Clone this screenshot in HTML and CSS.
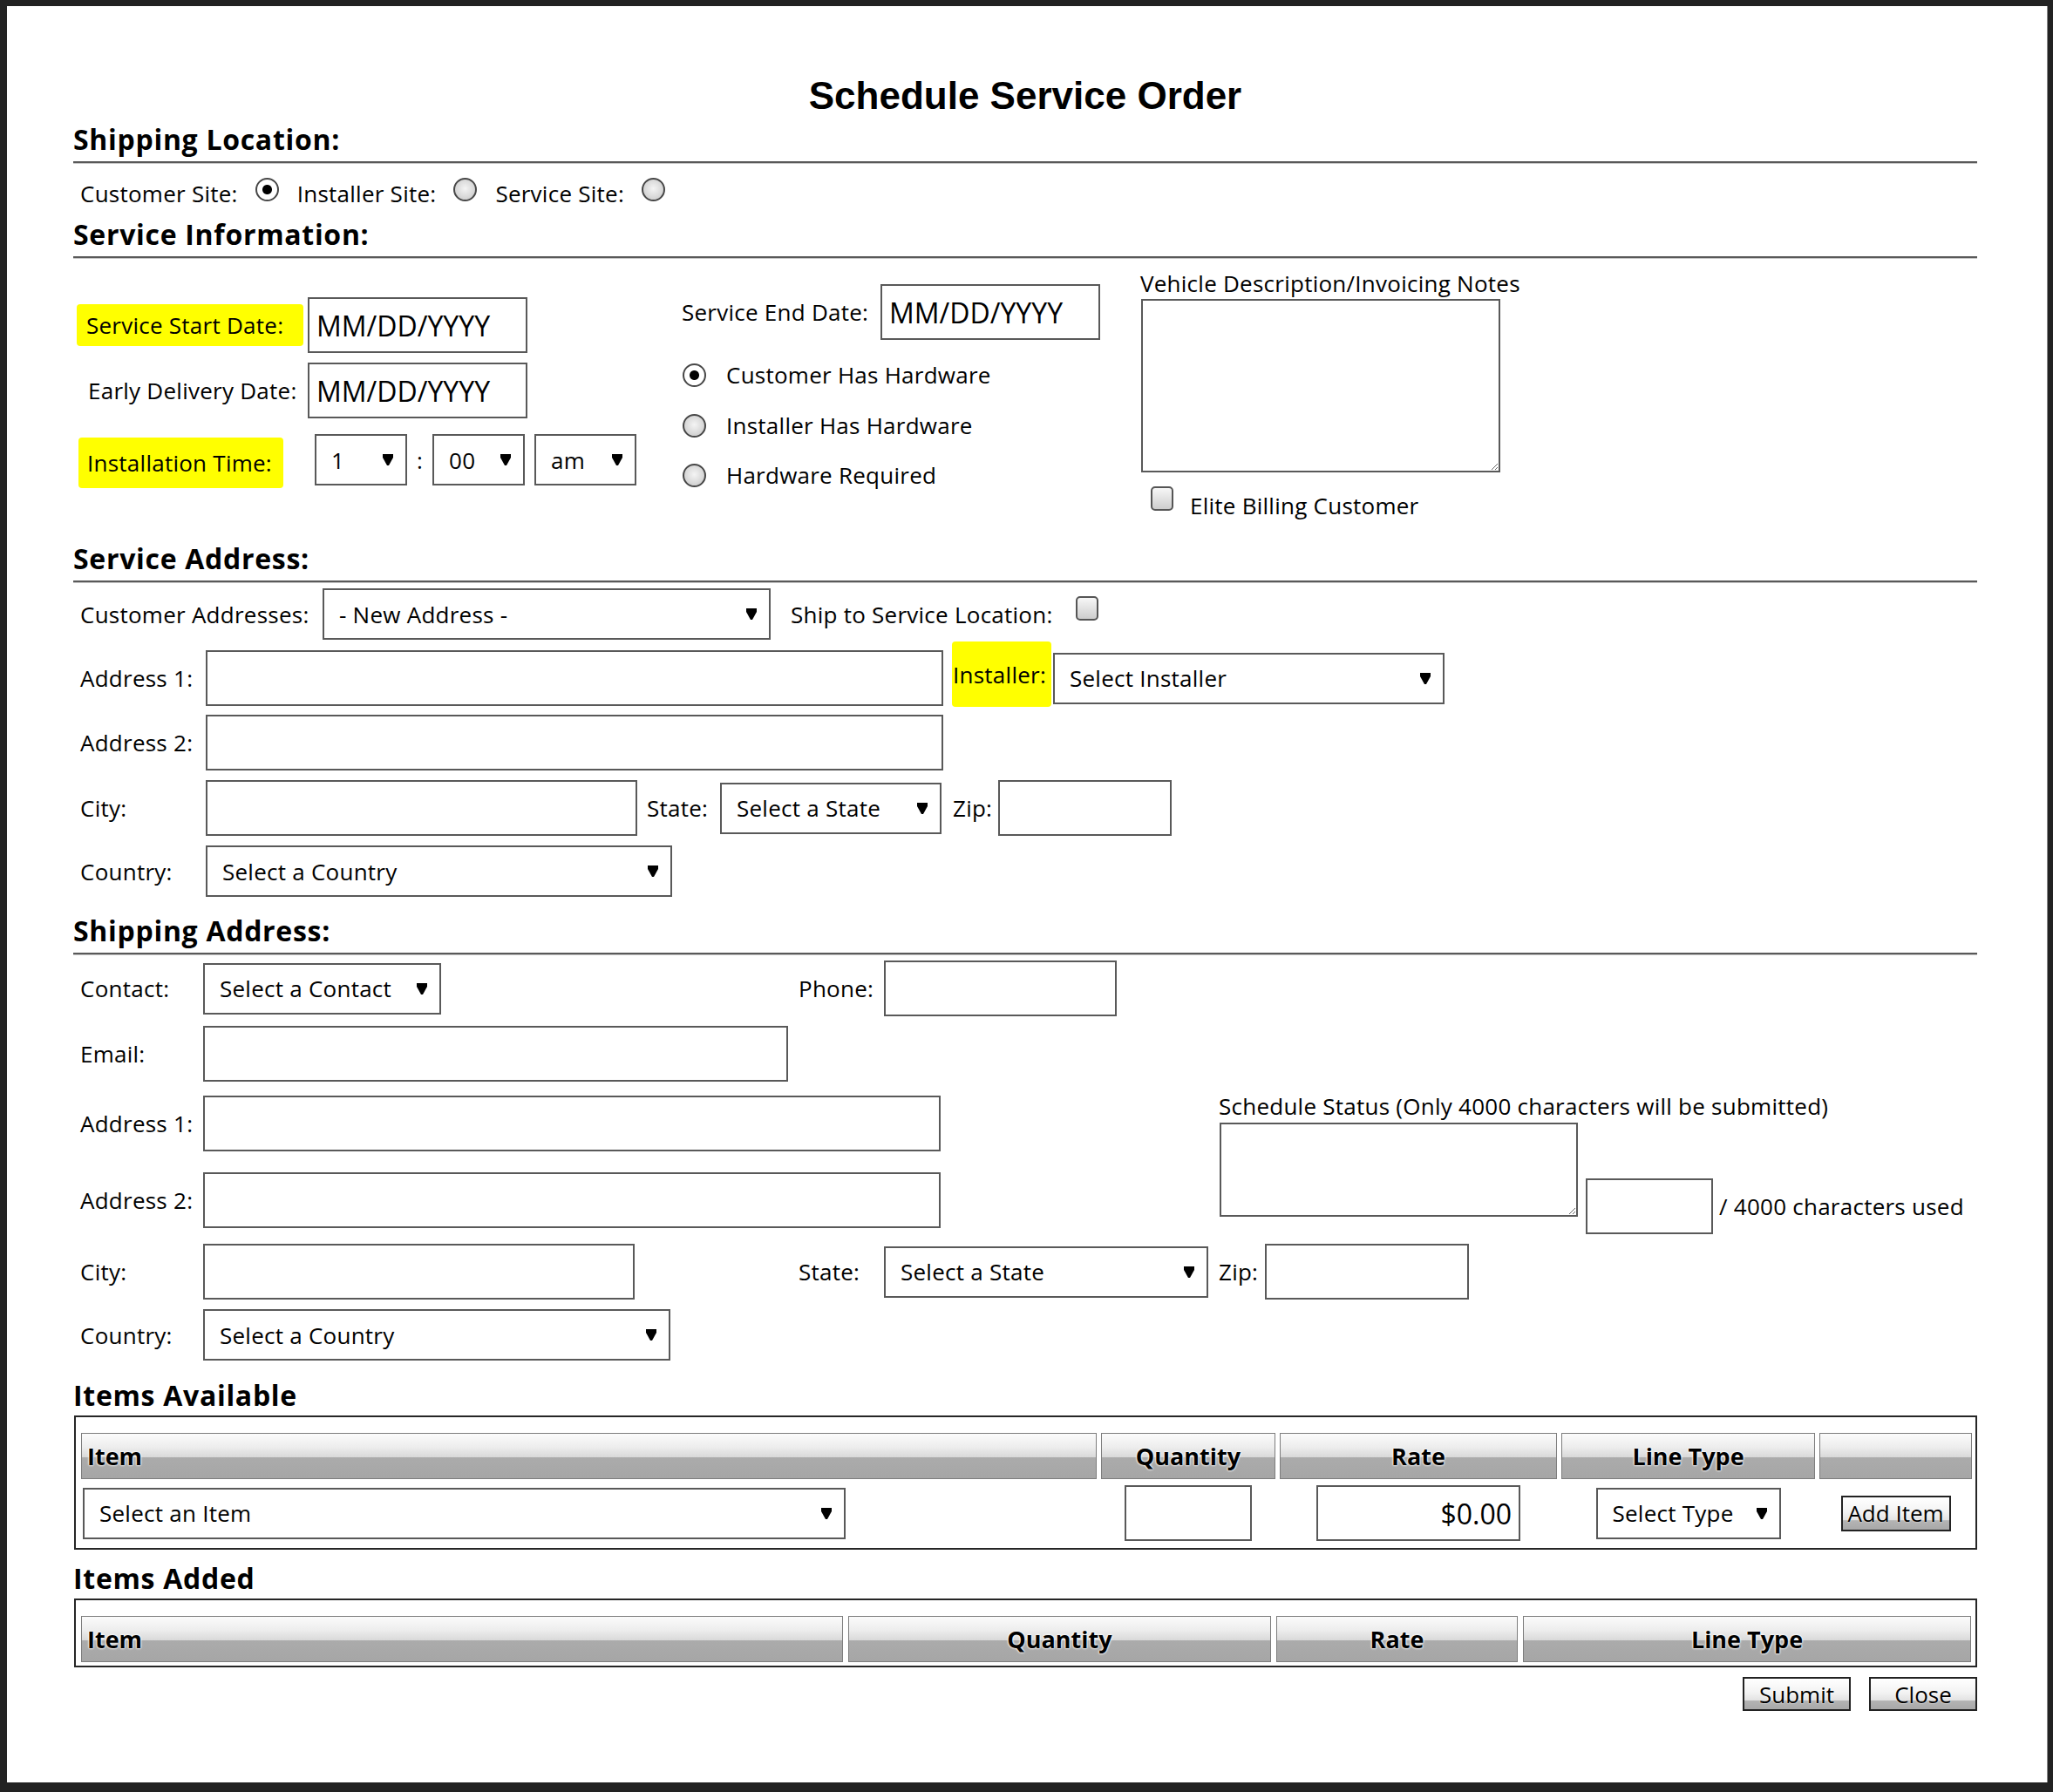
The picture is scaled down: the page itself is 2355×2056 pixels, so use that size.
FILE: index.html
```html
<!DOCTYPE html>
<html lang="en">
<head>
<meta charset="utf-8">
<title>Schedule Service Order</title>
<link rel="stylesheet" href="styles.css">
</head>
<body>
<div class="panel">
  <h1 class="title">Schedule Service Order</h1>

  <h2 class="sec sec-loc">Shipping Location:</h2>
  <div class="site-row">
    <span>Customer Site:</span><input type="radio" name="site" class="radio site-radio" checked>
    <span>Installer Site:</span><input type="radio" name="site" class="radio site-radio">
    <span>Service Site:</span><input type="radio" name="site" class="radio site-radio">
  </div>

  <h2 class="sec sec-info">Service Information:</h2>
  <div class="info">
    <div class="info-left">
      <div class="irow">
        <span class="hl hl-start">Service Start Date:</span>
        <input class="txt date" type="text" value="MM/DD/YYYY">
      </div>
      <div class="irow">
        <span class="ilabel">Early Delivery Date:</span>
        <input class="txt date" type="text" value="MM/DD/YYYY">
      </div>
      <div class="irow irow-time">
        <span class="hl hl-time">Installation Time:</span>
        <div class="sel sel-hour"><span>1</span><svg class="arr" viewBox="0 0 12 13"><path d="M0 0H12V4L7 13H5L0 4Z"/></svg></div>
        <span class="colon">:</span>
        <div class="sel sel-min"><span>00</span><svg class="arr" viewBox="0 0 12 13"><path d="M0 0H12V4L7 13H5L0 4Z"/></svg></div>
        <div class="sel sel-ampm"><span>am</span><svg class="arr" viewBox="0 0 12 13"><path d="M0 0H12V4L7 13H5L0 4Z"/></svg></div>
      </div>
    </div>
    <div class="info-mid">
      <div class="mrow"><span class="mlabel">Service End Date:</span><input class="txt date" type="text" value="MM/DD/YYYY"></div>
      <label class="rrow rrow-1"><input type="radio" name="hw" class="radio" checked><span>Customer Has Hardware</span></label>
      <label class="rrow"><input type="radio" name="hw" class="radio"><span>Installer Has Hardware</span></label>
      <label class="rrow rrow-3"><input type="radio" name="hw" class="radio"><span>Hardware Required</span></label>
    </div>
    <div class="info-right">
      <div class="notes-label">Vehicle Description/Invoicing Notes</div>
      <textarea class="notes"></textarea>
      <label class="elite"><input type="checkbox" class="check elite-check"><span class="elite-text">Elite Billing Customer</span></label>
    </div>
  </div>

  <h2 class="sec sec-svc">Service Address:</h2>
  <div class="arow arow-1">
    <span class="cust-label">Customer Addresses:</span>
    <div class="sel sel-cust"><span>- New Address -</span><svg class="arr" viewBox="0 0 12 13"><path d="M0 0H12V4L7 13H5L0 4Z"/></svg></div>
    <span class="ship-label">Ship to Service Location:</span>
    <input type="checkbox" class="check ship-check">
  </div>
  <div class="arow arow-2">
    <span class="alabel">Address 1:</span>
    <input class="txt addr" type="text">
    <span class="hl hl-inst">Installer:</span>
    <div class="sel sel-inst"><span>Select Installer</span><svg class="arr" viewBox="0 0 12 13"><path d="M0 0H12V4L7 13H5L0 4Z"/></svg></div>
  </div>
  <div class="arow arow-3">
    <span class="alabel">Address 2:</span>
    <input class="txt addr" type="text">
  </div>
  <div class="arow arow-4">
    <span class="alabel">City:</span>
    <input class="txt city" type="text">
    <span class="state-label">State:</span>
    <div class="sel sel-state"><span>Select a State</span><svg class="arr" viewBox="0 0 12 13"><path d="M0 0H12V4L7 13H5L0 4Z"/></svg></div>
    <span class="zip-label">Zip:</span>
    <input class="txt zip" type="text">
  </div>
  <div class="arow arow-5">
    <span class="alabel">Country:</span>
    <div class="sel sel-country"><span>Select a Country</span><svg class="arr" viewBox="0 0 12 13"><path d="M0 0H12V4L7 13H5L0 4Z"/></svg></div>
  </div>

  <h2 class="sec sec-ship">Shipping Address:</h2>
  <div class="sgrid">
    <div class="cell r1 c1">Contact:</div>
    <div class="cell r1 c2"><div class="sel sel-contact"><span>Select a Contact</span><svg class="arr" viewBox="0 0 12 13"><path d="M0 0H12V4L7 13H5L0 4Z"/></svg></div></div>
    <div class="cell r1 c3">Phone:</div>
    <div class="cell r1 c4"><input class="txt phone" type="text"></div>

    <div class="cell r2 c1">Email:</div>
    <div class="cell r2 c2"><input class="txt email" type="text"></div>

    <div class="cell r3 c1">Address 1:</div>
    <div class="cell r3 cspan"><input class="txt addr" type="text"></div>

    <div class="sched">
      <div class="sched-label">Schedule Status (Only 4000 characters will be submitted)</div>
      <div class="sched-body">
        <textarea class="sched-text"></textarea>
        <div class="counter-wrap">
          <input class="txt counter" type="text">
          <span class="counter-text">/ 4000 characters used</span>
        </div>
      </div>
    </div>

    <div class="cell r4 c1">Address 2:</div>
    <div class="cell r4 cspan"><input class="txt addr" type="text"></div>

    <div class="cell r5 c1">City:</div>
    <div class="cell r5 c2"><input class="txt scity" type="text"></div>
    <div class="cell r5 c3">State:</div>
    <div class="cell r5 c4"><div class="sel sel-sstate"><span>Select a State</span><svg class="arr" viewBox="0 0 12 13"><path d="M0 0H12V4L7 13H5L0 4Z"/></svg></div></div>
    <div class="cell r5 c5"><span class="szip-label">Zip:</span><input class="txt szip" type="text"></div>

    <div class="cell cell-short r6 c1">Country:</div>
    <div class="cell cell-short r6 c2"><div class="sel sel-scountry"><span>Select a Country</span><svg class="arr" viewBox="0 0 12 13"><path d="M0 0H12V4L7 13H5L0 4Z"/></svg></div></div>
  </div>

  <h3 class="items-h">Items Available</h3>
  <div class="tbl">
    <div class="tgrid tgrid-avail thead">
      <div class="th th-left">Item</div>
      <div class="th">Quantity</div>
      <div class="th">Rate</div>
      <div class="th">Line Type</div>
      <div class="th"></div>
    </div>
    <div class="tgrid tgrid-avail tbody">
      <div class="td td-left"><div class="sel sel-item"><span>Select an Item</span><svg class="arr" viewBox="0 0 12 13"><path d="M0 0H12V4L7 13H5L0 4Z"/></svg></div></div>
      <div class="td"><input class="txt qty" type="text"></div>
      <div class="td"><input class="txt rate" type="text" value="$0.00"></div>
      <div class="td"><div class="sel sel-type"><span>Select Type</span><svg class="arr" viewBox="0 0 12 13"><path d="M0 0H12V4L7 13H5L0 4Z"/></svg></div></div>
      <div class="td"><button class="btn btn-add" type="button">Add Item</button></div>
    </div>
  </div>

  <h3 class="items-h items-h2">Items Added</h3>
  <div class="tbl tbl-added">
    <div class="tgrid tgrid-added thead">
      <div class="th th-left">Item</div>
      <div class="th">Quantity</div>
      <div class="th">Rate</div>
      <div class="th">Line Type</div>
    </div>
  </div>

  <div class="actions">
    <button class="btn" type="button">Submit</button>
    <button class="btn" type="button">Close</button>
  </div>
</div>
</body>
</html>
```
FILE: styles.css
```css
* { box-sizing: border-box; }

html, body {
  margin: 0;
  background: #222;
}

body {
  font-family: "Open Sans", "Liberation Sans", sans-serif;
  font-size: 26px;
  letter-spacing: 0.25px;
  line-height: 36px;
  color: #000;
}

.panel {
  width: 2340px;
  height: 2038px;
  margin: 7px 0 0 8px;
  padding: 78px 80px 0 76px;
  background: #fff;
  box-shadow: 1px 0 0 #8a8a8a;
}

.title {
  margin: 0;
  font-family: "Liberation Sans", Arial, sans-serif;
  font-size: 44px;
  line-height: 50px;
  font-weight: 700;
  letter-spacing: 0;
  text-align: center;
}

.sec {
  margin: 0;
  font-size: 32px;
  letter-spacing: 0.7px;
  line-height: 44px;
  font-weight: 700;
  padding-bottom: 3px;
  border-bottom: 2px solid #595959;
  box-shadow: 0 1px 0 #c6c6c6;
}
.sec-loc { margin-top: 3px; }
.sec-info { margin-top: 7px; }
.sec-svc { margin-top: 21px; }
.sec-ship { margin-top: 17px; }

.radio {
  -webkit-appearance: none;
  appearance: none;
  flex: none;
  width: 27px;
  height: 27px;
  margin: 0;
  border: 2px solid #474747;
  border-radius: 50%;
  background: radial-gradient(circle at 50% 45%, #f4f4f4 0, #d8d8d8 60%, #bebebe 100%);
}
.radio:checked {
  background: radial-gradient(circle, #000 0 5px, #fff 6px);
}

.check {
  -webkit-appearance: none;
  appearance: none;
  flex: none;
  width: 26px;
  height: 28px;
  margin: 0;
  border: 2px solid #555;
  border-radius: 5px;
  background: linear-gradient(#f7f7f7, #cdcdcd);
}

/* shipping location radios */
.site-row {
  display: flex;
  align-items: flex-start;
  height: 36px;
  margin-top: 17px;
  padding-left: 8px;
}
.site-row .site-radio { margin: 0 21px 0 20px; }

/* common fields */
.txt {
  height: 64px;
  margin: 0;
  border: 2px solid #595959;
  border-radius: 0;
  padding: 0 8px;
  font-family: inherit;
  font-size: 32px;
  letter-spacing: 0;
  color: #000;
  background: #fff;
  outline: none;
  flex: none;
}
.date { width: 252px; }

.sel {
  display: flex;
  align-items: center;
  justify-content: space-between;
  flex: none;
  height: 59px;
  border: 2px solid #595959;
  padding: 0 14px 0 17px;
  background: #fff;
  font-size: 26px;
  white-space: nowrap;
}
.arr {
  flex: none;
  width: 12px;
  height: 13px;
  fill: #000;
}

.hl {
  display: flex;
  align-items: center;
  flex: none;
  background: #ffff00;
  border-radius: 4px;
}

/* service information */
.info {
  display: flex;
  align-items: flex-start;
  padding-left: 4px;
}
.info-left {
  flex: none;
  width: 694px;
  margin-top: 45px;
}
.irow {
  display: flex;
  align-items: center;
  height: 64px;
}
.irow + .irow { margin-top: 11px; }
.irow + .irow-time { margin-top: 18px; height: 59px; }

.hl-start {
  width: 260px;
  height: 48px;
  padding-left: 11px;
  margin-right: 5px;
}
.ilabel {
  flex: none;
  width: 265px;
  padding-left: 13px;
}
.hl-time {
  width: 235px;
  height: 58px;
  padding-left: 10px;
  margin: 7px 36px 0 2px;
}
.sel-hour { width: 106px; }
.colon { margin: 0 11px; }
.sel-min { width: 106px; }
.sel-ampm { width: 117px; margin-left: 11px; }

.info-mid {
  flex: none;
  width: 526px;
  margin-top: 30px;
}
.mrow {
  display: flex;
  align-items: center;
  height: 64px;
}
.mlabel { flex: none; width: 228px; }
.rrow {
  display: flex;
  align-items: center;
  height: 38px;
  margin-top: 20px;
}
.rrow-1 { margin-top: 21px; }
.rrow-3 { margin-top: 19px; }
.rrow .radio { margin: 0 23px 0 1px; }

.info-right {
  flex: none;
  margin-top: 16px;
}
.notes-label { line-height: 26px; white-space: nowrap; }
.notes {
  display: block;
  width: 412px;
  height: 199px;
  margin: 5px 0 0 1px;
  border: 2px solid #595959;
  resize: both;
  font-family: inherit;
  font-size: 26px;
}
.elite {
  display: flex;
  align-items: flex-start;
  margin-top: 16px;
  padding-left: 12px;
}
.elite-check { margin-right: 19px; }
.elite-text { padding-top: 4px; }

/* service address */
.arow {
  display: flex;
  align-items: center;
  height: 64px;
  margin-top: 10px;
  padding-left: 8px;
}
.arow-1 { height: 59px; margin-top: 7px; }
.arow-2 { margin-top: 12px; }
.arow-4 { margin-top: 11px; }
.arow-5 { margin-top: 11px; height: 59px; }

.alabel { flex: none; width: 144px; }
.cust-label { flex: none; width: 278px; white-space: nowrap; }
.sel-cust { width: 514px; }
.ship-label { flex: none; width: 327px; margin-left: 23px; white-space: nowrap; }
.ship-check { align-self: flex-start; margin-top: 9px; }
.addr { width: 846px; }
.hl-inst {
  width: 114px;
  height: 75px;
  padding-left: 1px;
  margin: 0 0 9px 10px;
}
.sel-inst { width: 449px; margin-left: 2px; }
.city { width: 495px; }
.state-label { flex: none; width: 84px; margin-left: 11px; }
.sel-state { width: 254px; }
.zip-label { flex: none; width: 52px; margin-left: 13px; }
.zip { width: 199px; }
.sel-country { width: 535px; }

/* shipping address grid */
.sgrid {
  display: grid;
  grid-template-columns: 141px 683px 98px 384px 1fr;
  grid-template-rows: 64px 75px 80px 88px 82px 70px;
  margin-top: 7px;
  padding-left: 8px;
}
.cell {
  display: flex;
  align-items: center;
  height: 64px;
  align-self: end;
  white-space: nowrap;
}
.cell-short { height: 59px; }
.r1 { grid-row: 1; }
.r2 { grid-row: 2; }
.r3 { grid-row: 3; }
.r4 { grid-row: 4; }
.r5 { grid-row: 5; }
.r6 { grid-row: 6; }
.c1 { grid-column: 1; }
.c2 { grid-column: 2; }
.c3 { grid-column: 3; }
.c4 { grid-column: 4; }
.c5 { grid-column: 5; }
.cspan { grid-column: 2 / 5; }

.sel-contact { width: 273px; }
.phone { width: 267px; }
.email { width: 671px; }
.scity { width: 495px; }
.sel-sstate { width: 372px; }
.szip-label { flex: none; width: 53px; }
.szip { width: 234px; }
.sel-scountry { width: 536px; }

.sched {
  grid-column: 5;
  grid-row: 3 / 5;
  align-self: start;
  margin-top: 15px;
}
.sched-label { line-height: 26px; white-space: nowrap; }
.sched-body {
  display: flex;
  align-items: flex-end;
  margin-top: 6px;
}
.sched-text {
  display: block;
  flex: none;
  width: 411px;
  height: 108px;
  margin: 0 0 20px 1px;
  border: 2px solid #595959;
  resize: both;
  font-family: inherit;
}
.counter-wrap {
  display: flex;
  align-items: center;
}
.counter { width: 146px; margin-left: 9px; }
.counter-text { margin-left: 7px; white-space: nowrap; }

/* items tables */
.items-h {
  margin: 20px 0 0;
  font-size: 32px;
  letter-spacing: 0.7px;
  line-height: 40px;
  font-weight: 700;
}
.items-h2 { margin-top: 13px; }

.tbl {
  margin: 3px 0 0 1px;
  border: 2px solid #262626;
  padding: 18px 4px 8px 6px;
}
.tbl-added { padding-bottom: 4px; }

.tgrid {
  display: grid;
  column-gap: 5px;
}
.tgrid-avail { grid-template-columns: 1165px 200px 318px 291px 175px; }
.tgrid-added { grid-template-columns: 874px 485px 277px 514px; column-gap: 6px; }

.thead { height: 53px; }
.th {
  display: flex;
  align-items: center;
  justify-content: center;
  border: 1px solid #7d7d7d;
  background: linear-gradient(#fbfbfb 0%, #ededed 30%, #dadada 52%, #ababab 53%, #a6a6a6 100%);
  font-size: 27px;
  letter-spacing: 0;
  font-weight: 700;
  text-shadow: 0 0 2px #fff, 0 0 2px #fff, 0 0 3px #fff;
}
.th-left { justify-content: flex-start; padding-left: 6px; }

.tbody {
  height: 64px;
  margin-top: 7px;
}
.td {
  display: flex;
  align-items: center;
  justify-content: center;
}
.td-left { justify-content: flex-start; padding-left: 2px; }
.sel-item { width: 875px; }
.qty { width: 146px; }
.rate { width: 234px; text-align: right; }
.sel-type { width: 212px; }

.btn {
  width: 124px;
  height: 39px;
  margin: 0;
  border: 2px solid #222;
  border-radius: 0;
  padding: 0;
  font-family: inherit;
  font-size: 26px;
  letter-spacing: 0;
  line-height: 1;
  color: #000;
  background: linear-gradient(#ffffff 0%, #f3f3f3 45%, #e3e3e3 70%, #b4b4b4 72%, #a8a8a8 100%);
  text-shadow: 0 0 2px #fff;
}
.btn-add { width: 126px; height: 41px; }

.actions {
  display: flex;
  justify-content: flex-end;
  gap: 21px;
  margin-top: 11px;
}
```
